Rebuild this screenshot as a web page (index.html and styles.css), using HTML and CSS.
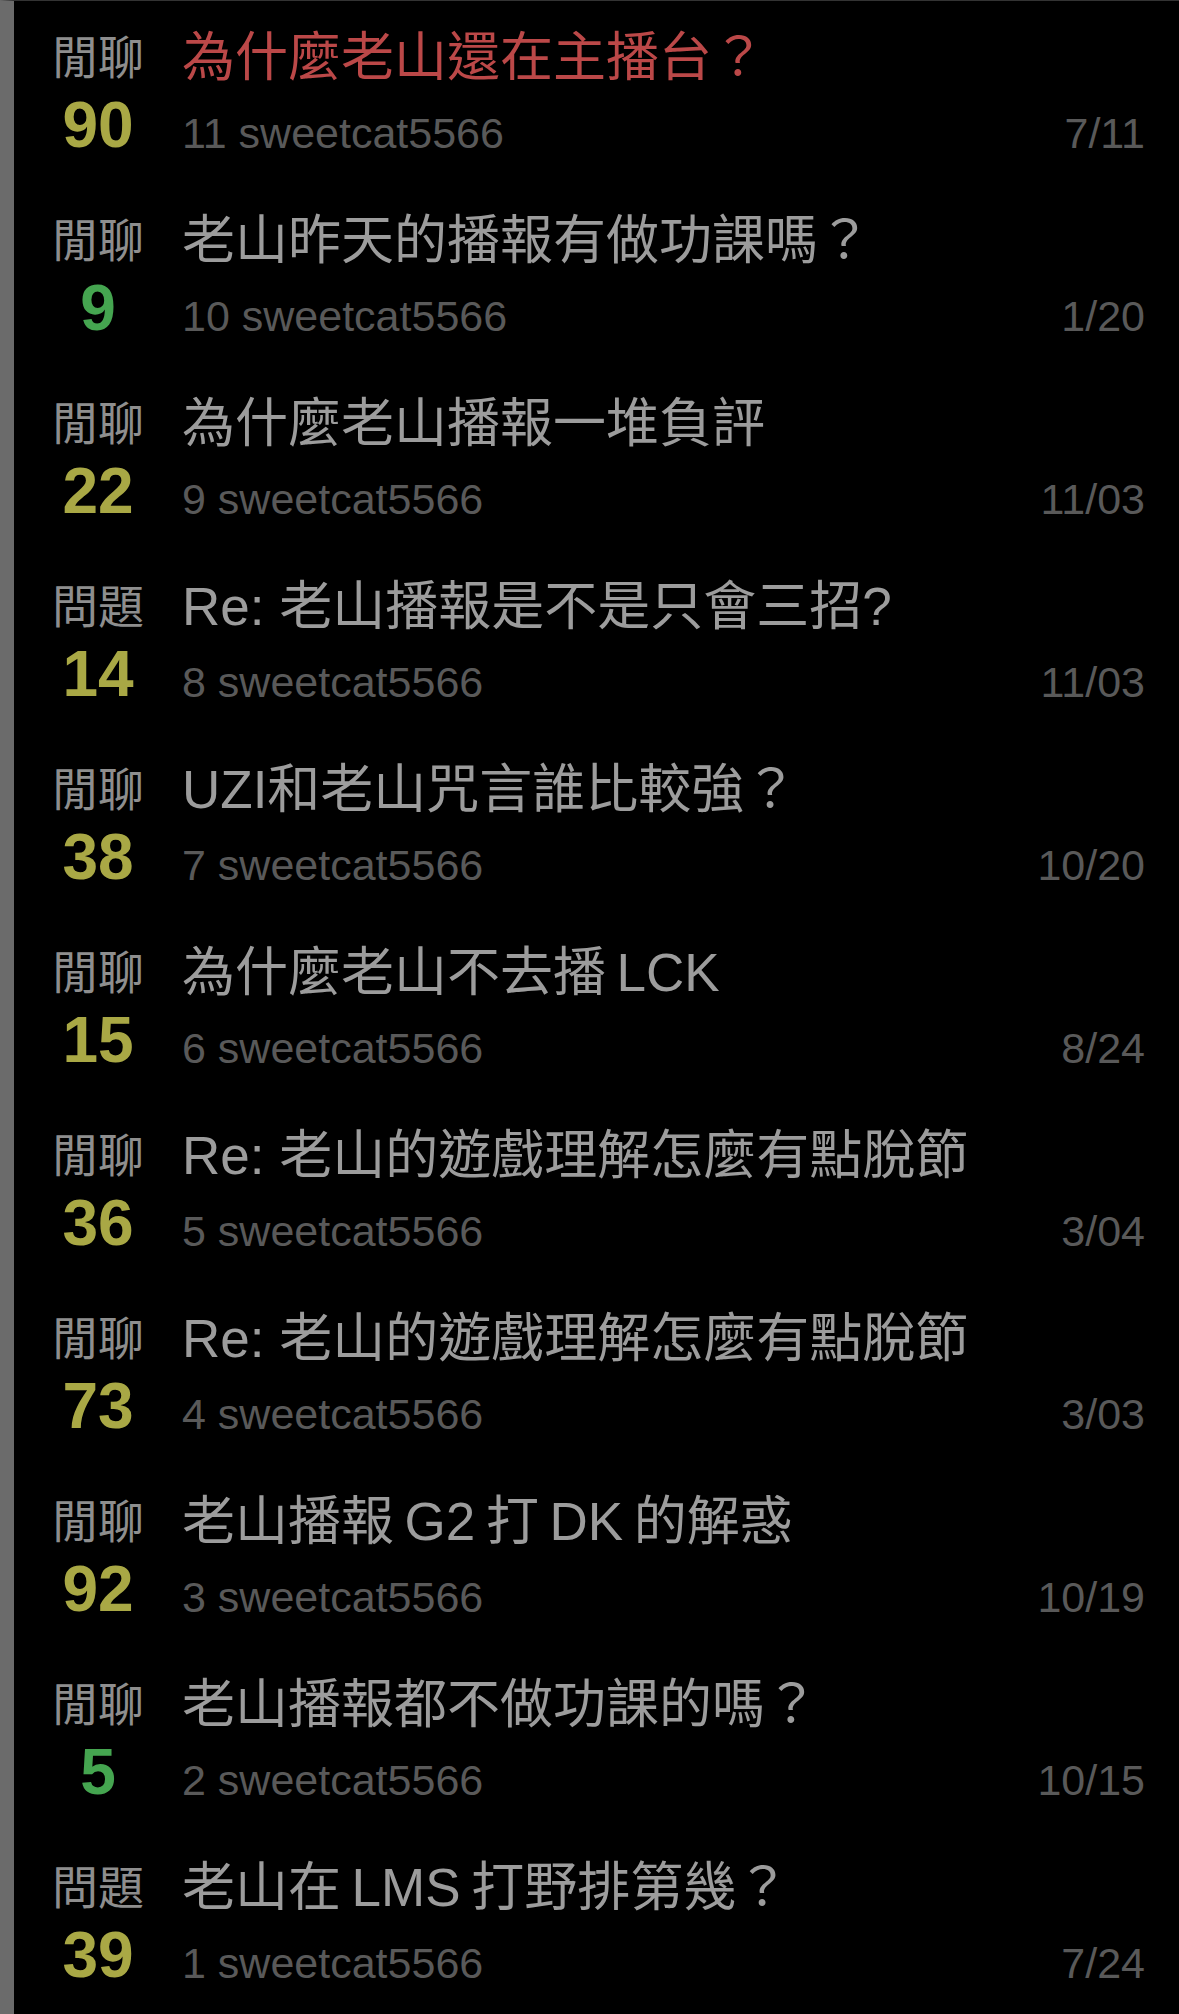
FILE: index.html
```
<!DOCTYPE html>
<html lang="zh-Hant">

<head>
    <meta charset="UTF-8">
    <meta name="viewport" content="width=device-width, initial-scale=1.0">
    <title>sweetcat5566</title>
    <link rel="stylesheet" href="styles.css">
</head>

<body>
    <div class="list">
        <!-- 文章列表 -->
        <div class="row">
            <div class="side">
                <div class="cat">閒聊</div>
                <div class="num yellow">90</div>
            </div>
            <div class="main">
                <div class="title red">為什麼老山還在主播台？</div>
                <div class="meta"><span>11 sweetcat5566</span><span>7/11</span></div>
            </div>
        </div>
        <div class="row">
            <div class="side">
                <div class="cat">閒聊</div>
                <div class="num green">9</div>
            </div>
            <div class="main">
                <div class="title">老山昨天的播報有做功課嗎？</div>
                <div class="meta"><span>10 sweetcat5566</span><span>1/20</span></div>
            </div>
        </div>
        <div class="row">
            <div class="side">
                <div class="cat">閒聊</div>
                <div class="num yellow">22</div>
            </div>
            <div class="main">
                <div class="title">為什麼老山播報一堆負評</div>
                <div class="meta"><span>9 sweetcat5566</span><span>11/03</span></div>
            </div>
        </div>
        <div class="row">
            <div class="side">
                <div class="cat">問題</div>
                <div class="num yellow">14</div>
            </div>
            <div class="main">
                <div class="title">Re: 老山播報是不是只會三招?</div>
                <div class="meta"><span>8 sweetcat5566</span><span>11/03</span></div>
            </div>
        </div>
        <div class="row">
            <div class="side">
                <div class="cat">閒聊</div>
                <div class="num yellow">38</div>
            </div>
            <div class="main">
                <div class="title">UZI和老山咒言誰比較強？</div>
                <div class="meta"><span>7 sweetcat5566</span><span>10/20</span></div>
            </div>
        </div>
        <div class="row">
            <div class="side">
                <div class="cat">閒聊</div>
                <div class="num yellow">15</div>
            </div>
            <div class="main">
                <div class="title">為什麼老山不去播&#8201;LCK</div>
                <div class="meta"><span>6 sweetcat5566</span><span>8/24</span></div>
            </div>
        </div>
        <div class="row">
            <div class="side">
                <div class="cat">閒聊</div>
                <div class="num yellow">36</div>
            </div>
            <div class="main">
                <div class="title">Re: 老山的遊戲理解怎麼有點脫節</div>
                <div class="meta"><span>5 sweetcat5566</span><span>3/04</span></div>
            </div>
        </div>
        <div class="row">
            <div class="side">
                <div class="cat">閒聊</div>
                <div class="num yellow">73</div>
            </div>
            <div class="main">
                <div class="title">Re: 老山的遊戲理解怎麼有點脫節</div>
                <div class="meta"><span>4 sweetcat5566</span><span>3/03</span></div>
            </div>
        </div>
        <div class="row">
            <div class="side">
                <div class="cat">閒聊</div>
                <div class="num yellow">92</div>
            </div>
            <div class="main">
                <div class="title">老山播報&#8201;G2&#8201;打&#8201;DK&#8201;的解惑</div>
                <div class="meta"><span>3 sweetcat5566</span><span>10/19</span></div>
            </div>
        </div>
        <div class="row">
            <div class="side">
                <div class="cat">閒聊</div>
                <div class="num green">5</div>
            </div>
            <div class="main">
                <div class="title">老山播報都不做功課的嗎？</div>
                <div class="meta"><span>2 sweetcat5566</span><span>10/15</span></div>
            </div>
        </div>
        <div class="row">
            <div class="side">
                <div class="cat">問題</div>
                <div class="num yellow">39</div>
            </div>
            <div class="main">
                <div class="title">老山在&#8201;LMS&#8201;打野排第幾？</div>
                <div class="meta"><span>1 sweetcat5566</span><span>7/24</span></div>
            </div>
        </div>
    </div>
</body>

</html>
```

FILE: styles.css
```
* {
    margin: 0;
    padding: 0;
}

body {
    background-color: #000;
    font-family: "Liberation Sans", "Noto Sans CJK TC", sans-serif;
}

.list {
    border-top: 1px solid #333;
    border-left: 14px solid #6b6b6b;
}

.row {
    display: flex;
    height: 183px;
}

.side {
    width: 168px;
    padding-top: 27px;
    text-align: center;
}

.cat {
    font-size: 46px;
    line-height: 60px;
    color: #8e8e8e;
}

.num {
    margin-top: 2px;
    font-size: 64px;
    line-height: 70px;
    font-weight: bold;
}

.yellow {
    color: #a9a845;
}

.green {
    color: #45a550;
}

.main {
    flex: 1;
    padding-top: 27px;
    padding-right: 34px;
}

.title {
    font-size: 53px;
    line-height: 60px;
    color: #9c9c9c;
    white-space: nowrap;
}

.red {
    color: #bb4848;
}

.meta {
    display: flex;
    justify-content: space-between;
    margin-top: 20px;
    font-size: 43px;
    line-height: 50px;
    color: #595959;
}
```
